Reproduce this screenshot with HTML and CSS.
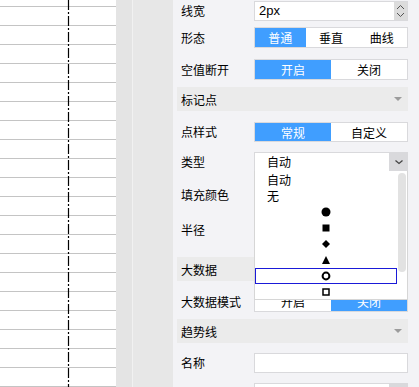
FILE: index.html
```html
<!DOCTYPE html>
<html lang="zh">
<head>
  <meta charset="UTF-8" />
  <meta name="viewport" content="width=device-width, initial-scale=1.0"/>
  <title>图表样式设置</title>
  <link rel="stylesheet" href="styles.css">
</head>
<body>
<div class="app">

  <div class="chart">
    <svg width="116" height="387" viewBox="0 0 116 387">
      <g stroke="#c4c4c4" stroke-width="1">
        <line x1="0" y1="6.5" x2="116" y2="6.5"/>
        <line x1="0" y1="25.5" x2="116" y2="25.5"/>
        <line x1="0" y1="44.5" x2="116" y2="44.5"/>
        <line x1="0" y1="63.5" x2="116" y2="63.5"/>
        <line x1="0" y1="82.5" x2="116" y2="82.5"/>
        <line x1="0" y1="101.5" x2="116" y2="101.5"/>
        <line x1="0" y1="120.5" x2="116" y2="120.5"/>
        <line x1="0" y1="139.5" x2="116" y2="139.5"/>
        <line x1="0" y1="158.5" x2="116" y2="158.5"/>
        <line x1="0" y1="177.5" x2="116" y2="177.5"/>
        <line x1="0" y1="196.5" x2="116" y2="196.5"/>
        <line x1="0" y1="215.5" x2="116" y2="215.5"/>
        <line x1="0" y1="234.5" x2="116" y2="234.5"/>
        <line x1="0" y1="253.5" x2="116" y2="253.5"/>
        <line x1="0" y1="272.5" x2="116" y2="272.5"/>
        <line x1="0" y1="291.5" x2="116" y2="291.5"/>
        <line x1="0" y1="310.5" x2="116" y2="310.5"/>
        <line x1="0" y1="329.5" x2="116" y2="329.5"/>
        <line x1="0" y1="348.5" x2="116" y2="348.5"/>
        <line x1="0" y1="367.5" x2="116" y2="367.5"/>
        <line x1="0" y1="386.5" x2="116" y2="386.5"/>
      </g>
      <line x1="68.5" y1="0" x2="68.5" y2="387" stroke="#000" stroke-width="1.2" stroke-dasharray="10 2 2 2"/>
    </svg>
  </div>

  <div class="rail"></div>
  <div class="rail-wide"></div>

  <div class="panel">

    <div class="row first">
      <span class="label">线宽</span>
      <div class="ctrl number">
        <span class="value">2px</span>
        <span class="spin">
          <svg width="9" height="16" viewBox="0 0 9 16"><path d="M1 6 L4.5 2.5 L8 6" fill="none" stroke="#555" stroke-width="1"/><path d="M1 10 L4.5 13.5 L8 10" fill="none" stroke="#555" stroke-width="1"/></svg>
        </span>
      </div>
    </div>

    <div class="row m6">
      <span class="label">形态</span>
      <div class="ctrl seg">
        <span class="on">普通</span>
        <span>垂直</span>
        <span>曲线</span>
      </div>
    </div>

    <div class="row">
      <span class="label">空值断开</span>
      <div class="ctrl seg">
        <span class="on">开启</span>
        <span>关闭</span>
      </div>
    </div>

    <div class="head">
      <span>标记点</span>
      <i class="caret"></i>
    </div>

    <div class="row">
      <span class="label">点样式</span>
      <div class="ctrl seg h20">
        <span class="on">常规</span>
        <span>自定义</span>
      </div>
    </div>

    <div class="row tight">
      <span class="label">类型</span>
      <div class="ctrl select">
        <span class="value">自动</span>
        <span class="arrow">
          <svg width="12" height="12" viewBox="0 0 12 12"><path d="M2.5 4.5 L6 7.5 L9.5 4.5" fill="none" stroke="#444" stroke-width="1.3"/></svg>
        </span>

        <div class="dropdown">
          <ul class="options">
            <li class="text">自动</li>
            <li class="text">无</li>
            <li><svg width="10" height="10" viewBox="0 0 10 10"><circle cx="5" cy="5" r="4.5" fill="#000"/></svg></li>
            <li><svg width="10" height="10" viewBox="0 0 10 10"><rect x="1.5" y="1.5" width="7" height="7" fill="#000"/></svg></li>
            <li><svg width="10" height="10" viewBox="0 0 10 10"><polygon points="5,1 9,5 5,9 1,5" fill="#000"/></svg></li>
            <li><svg width="10" height="10" viewBox="0 0 10 10"><polygon points="5,1 9,9 1,9" fill="#000"/></svg></li>
            <li class="current"><svg width="10" height="10" viewBox="0 0 10 10"><circle cx="5" cy="5" r="3.4" fill="none" stroke="#000" stroke-width="2"/></svg></li>
            <li><svg width="10" height="10" viewBox="0 0 10 10"><rect x="2" y="2" width="6" height="6" fill="none" stroke="#000" stroke-width="1.5"/></svg></li>
          </ul>
          <div class="scroll"><i class="thumb"></i></div>
        </div>
      </div>
    </div>

    <div class="row">
      <span class="label">填充颜色</span>
      <div class="ctrl box h24"></div>
    </div>

    <div class="row">
      <span class="label">半径</span>
      <div class="ctrl box h24"></div>
    </div>

    <div class="head m15">
      <span>大数据</span>
      <i class="caret"></i>
    </div>

    <div class="row tight">
      <span class="label">大数据模式</span>
      <div class="ctrl seg">
        <span>开启</span>
        <span class="on">关闭</span>
      </div>
    </div>

    <div class="head">
      <span>趋势线</span>
      <i class="caret"></i>
    </div>

    <div class="row tight">
      <span class="label">名称</span>
      <div class="ctrl box"></div>
    </div>

    <div class="row tight">
      <span class="label"></span>
      <div class="ctrl select">
        <span class="value"></span>
        <span class="arrow"></span>
      </div>
    </div>

  </div>
</div>
</body>
</html>
```

FILE: styles.css
```css
* {
  box-sizing: border-box;
}

body {
  margin: 0;
  font-family: "Noto Sans CJK SC", "DejaVu Sans", sans-serif;
  font-size: 12px;
  color: #000;
  overflow: hidden;
}

.app {
  display: flex;
  height: 387px;
  overflow: hidden;
}

.chart {
  width: 116px;
  flex: none;
  background: #fff;
}

.chart svg {
  display: block;
}

.rail {
  width: 17px;
  flex: none;
  background: #e4e4e4;
  border-right: 1px solid #f1f1f1;
}

.rail-wide {
  width: 40px;
  flex: none;
  background: #e7e7e7;
}

.panel {
  flex: 1;
  background: #f3f3f6;
  padding: 0 11px 0 4px;
}

/* form rows */
.row {
  display: flex;
  align-items: center;
  margin-top: 11px;
  padding-left: 4px;
}

.row.first {
  margin-top: 1px;
}

.row.m6 {
  margin-top: 6px;
}

.row.tight {
  margin-top: 10px;
}

.label {
  width: 73px;
  flex: none;
  line-height: 16px;
}

.ctrl {
  width: 154px;
  height: 20px;
  background: #fff;
  border: 1px solid #d9d9dc;
}

.ctrl.h24 {
  height: 24px;
}

.number, .select {
  display: flex;
  align-items: stretch;
}

.number .value {
  flex: 1;
  padding-left: 4px;
  line-height: 18px;
  font-family: "Liberation Sans", sans-serif;
  font-size: 13px;
}

.number .spin {
  width: 13px;
  background: #dcdcdc;
  display: flex;
  align-items: center;
  justify-content: center;
}

.select {
  position: relative;
}

.select .value {
  flex: 1;
  padding-left: 12px;
  line-height: 18px;
}

.select .arrow {
  width: 19px;
  margin: -1px -1px -1px 0;
  background: #d9d9dc;
  display: flex;
  align-items: center;
  justify-content: center;
}

/* segmented buttons */
.seg {
  display: flex;
  height: 21px;
}

.seg.h20 {
  height: 20px;
}

.seg span {
  flex: 1;
  display: flex;
  align-items: center;
  justify-content: center;
}

.seg .on {
  background: #409eff;
  color: #fff;
}

/* section headers */
.head {
  display: flex;
  align-items: center;
  justify-content: space-between;
  height: 24px;
  margin-top: 7px;
  padding: 0 6px 0 4px;
  background: #ebebeb;
}

.head.m15 {
  margin-top: 15px;
}

.caret {
  width: 0;
  height: 0;
  border-left: 4px solid transparent;
  border-right: 4px solid transparent;
  border-top: 4px solid #9c9c9c;
}

/* open dropdown of 类型 */
.dropdown {
  position: absolute;
  top: 100%;
  left: -1px;
  right: -1px;
  height: 129px;
  background: #fff;
  border: 1px solid #d6d6d6;
  border-top: 0;
  display: flex;
  overflow: hidden;
  z-index: 5;
}

.options {
  list-style: none;
  margin: 0;
  padding: 1px 0 0;
  flex: 1;
}

.options li {
  height: 16px;
  display: flex;
  align-items: center;
  justify-content: center;
}

.options li.text {
  justify-content: flex-start;
  padding-left: 12px;
  line-height: 16px;
}

.options li.current {
  border: 1px solid #1a1ad8;
}

.scroll {
  width: 10px;
  flex: none;
  padding: 2px 1px 0;
}

.thumb {
  display: block;
  height: 99px;
  border-radius: 4px;
  background: #e2e2e2;
}
```
